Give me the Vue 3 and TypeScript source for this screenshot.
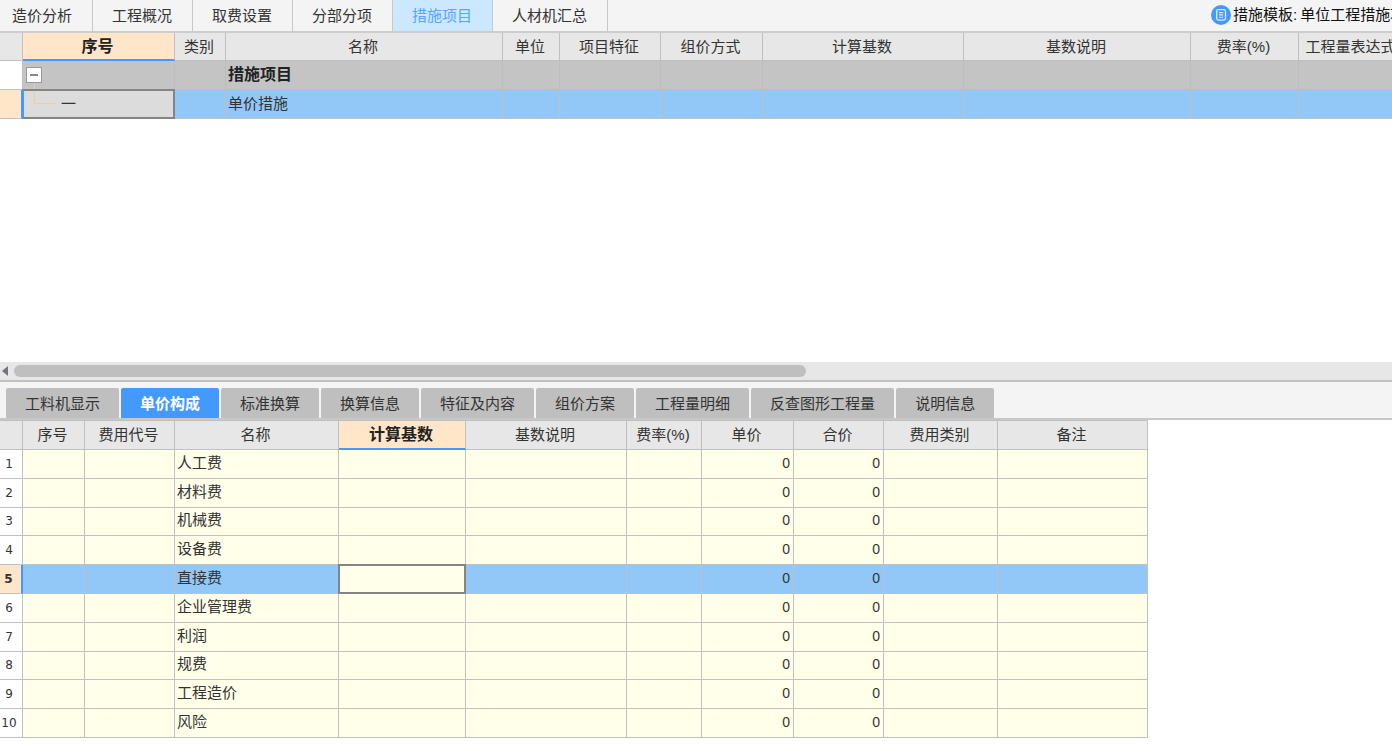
<script setup lang="ts">
import { ref } from 'vue'

interface Column {
  key: string
  label: string
  width: number
}

interface FeeRow {
  name: string
  unitPrice: number
  totalPrice: number
}

const mainTabs: string[] = ['造价分析', '工程概况', '取费设置', '分部分项', '措施项目', '人材机汇总']
const activeMainTab = ref('措施项目')

const itemColumns: Column[] = [
  { key: 'no', label: '序号', width: 152 },
  { key: 'type', label: '类别', width: 51 },
  { key: 'name', label: '名称', width: 277 },
  { key: 'unit', label: '单位', width: 57 },
  { key: 'feature', label: '项目特征', width: 101 },
  { key: 'method', label: '组价方式', width: 102 },
  { key: 'base', label: '计算基数', width: 201 },
  { key: 'baseNote', label: '基数说明', width: 227 },
  { key: 'rate', label: '费率(%)', width: 108 },
  { key: 'formula', label: '工程量表达式', width: 106 },
]
const itemRestColumns = itemColumns.slice(3)
const expanded = ref(true)

const detailTabs: string[] = [
  '工料机显示',
  '单价构成',
  '标准换算',
  '换算信息',
  '特征及内容',
  '组价方案',
  '工程量明细',
  '反查图形工程量',
  '说明信息',
]
const activeDetailTab = ref('单价构成')

const feeColumns: Column[] = [
  { key: 'no', label: '序号', width: 62 },
  { key: 'code', label: '费用代号', width: 90 },
  { key: 'name', label: '名称', width: 164 },
  { key: 'base', label: '计算基数', width: 127 },
  { key: 'baseNote', label: '基数说明', width: 161 },
  { key: 'rate', label: '费率(%)', width: 75 },
  { key: 'unitPrice', label: '单价', width: 92 },
  { key: 'totalPrice', label: '合价', width: 90 },
  { key: 'category', label: '费用类别', width: 114 },
  { key: 'remark', label: '备注', width: 150 },
]

const feeRows: FeeRow[] = [
  '人工费',
  '材料费',
  '机械费',
  '设备费',
  '直接费',
  '企业管理费',
  '利润',
  '规费',
  '工程造价',
  '风险',
].map((name) => ({ name, unitPrice: 0, totalPrice: 0 }))
const selectedRow = ref(4)
</script>

<template>
  <div class="page">
    <header class="topbar">
      <nav class="main-tabs" role="tablist">
        <button
          v-for="tab in mainTabs"
          :key="tab"
          type="button"
          role="tab"
          class="main-tab"
          :class="{ active: tab === activeMainTab }"
          :aria-selected="tab === activeMainTab"
          @click="activeMainTab = tab"
        >{{ tab }}</button>
      </nav>
      <button type="button" class="template">
        <svg class="template-icon" viewBox="0 0 20 20" aria-hidden="true">
          <circle cx="10" cy="10" r="10" fill="#4499fe" />
          <rect x="5.7" y="4.7" width="8.8" height="10.4" rx="1.8" fill="none" stroke="#dcecff" stroke-width="1.3" />
          <path d="M8 7.6h4.2M8 9.9h4.2M8 12.2h4.2" stroke="#dcecff" stroke-width="1.1" fill="none" />
        </svg>
        <span class="template-label">措施模板:</span>
        <span>单位工程措施项目</span>
      </button>
    </header>

    <main class="items">
      <table class="grid item-grid">
        <colgroup>
          <col class="col-head" />
          <col v-for="c in itemColumns" :key="c.key" :style="{ width: c.width + 'px' }" />
        </colgroup>
        <thead>
          <tr>
            <th class="corner"></th>
            <th v-for="c in itemColumns" :key="c.key" scope="col" :class="{ current: c.key === 'no' }">{{ c.label }}</th>
          </tr>
        </thead>
        <tbody>
          <tr class="group">
            <td class="row-head"></td>
            <td class="tree">
              <button type="button" class="toggle" aria-label="展开或折叠" :aria-expanded="expanded" @click="expanded = !expanded">
                <svg viewBox="0 0 16 16" aria-hidden="true">
                  <path d="M4 8h8" stroke="#555" stroke-width="1.4" />
                  <path v-if="!expanded" d="M8 4v8" stroke="#555" stroke-width="1.4" />
                </svg>
              </button>
            </td>
            <td></td>
            <td>措施项目</td>
            <td v-for="c in itemRestColumns" :key="c.key"></td>
          </tr>
          <tr v-if="expanded" class="selected">
            <td class="row-head"></td>
            <td class="focus tree-leaf">一</td>
            <td></td>
            <td>单价措施</td>
            <td v-for="c in itemRestColumns" :key="c.key"></td>
          </tr>
        </tbody>
      </table>
    </main>

    <div class="scrollbar">
      <svg class="scroll-arrow" viewBox="0 0 6 10" aria-hidden="true">
        <path d="M6 0v10L0 5z" fill="#73757a" />
      </svg>
      <div class="scroll-thumb"></div>
    </div>

    <section class="detail">
      <nav class="detail-tabs" role="tablist">
        <button
          v-for="tab in detailTabs"
          :key="tab"
          type="button"
          role="tab"
          class="detail-tab"
          :class="{ active: tab === activeDetailTab }"
          :aria-selected="tab === activeDetailTab"
          @click="activeDetailTab = tab"
        >{{ tab }}</button>
      </nav>
      <table class="grid fee-grid">
        <colgroup>
          <col class="col-head" />
          <col v-for="c in feeColumns" :key="c.key" :style="{ width: c.width + 'px' }" />
        </colgroup>
        <thead>
          <tr>
            <th class="corner"></th>
            <th v-for="c in feeColumns" :key="c.key" scope="col" :class="{ current: c.key === 'base' }">{{ c.label }}</th>
          </tr>
        </thead>
        <tbody>
          <tr v-for="(row, i) in feeRows" :key="row.name" :class="{ selected: i === selectedRow }" @click="selectedRow = i">
            <th scope="row" class="row-head">{{ i + 1 }}</th>
            <td></td>
            <td></td>
            <td>{{ row.name }}</td>
            <td :class="{ focus: i === selectedRow }"></td>
            <td></td>
            <td></td>
            <td class="number">{{ row.unitPrice }}</td>
            <td class="number">{{ row.totalPrice }}</td>
            <td></td>
            <td></td>
          </tr>
        </tbody>
      </table>
    </section>
  </div>
</template>

<style>
body {
  margin: 0;
  background: #fff;
}
</style>

<style scoped>
.page {
  display: flex;
  flex-direction: column;
  min-height: 100vh;
  overflow: hidden;
  font-family: "Liberation Sans", "Noto Sans CJK SC", sans-serif;
  font-size: 15px;
  line-height: 20px;
  color: #333;
}

button {
  margin: 0;
  border: 0;
  font: inherit;
  color: inherit;
  white-space: nowrap;
  cursor: pointer;
}

.topbar {
  display: flex;
  justify-content: space-between;
  height: 31px;
  background: #f4f4f4;
  border-bottom: 2px solid #cdcdcd;
}

.main-tabs {
  display: flex;
}

.main-tab {
  padding: 1px 20px 0 19px;
  border-right: 1px solid #c8c8c8;
  background: transparent;
}

.main-tab:first-child {
  padding-left: 12px;
}

.main-tab.active {
  background: #cce8ff;
  color: #56a5ff;
}

.template {
  display: flex;
  align-items: center;
  flex: 0 0 181px;
  padding: 0 0 1px;
  overflow: hidden;
  background: transparent;
  color: #111;
}

.template-icon {
  flex: none;
  width: 20px;
  height: 20px;
  margin-right: 2px;
}

.template-label {
  margin-right: 3px;
}

.items {
  flex: 1;
  overflow: hidden;
}

.grid {
  table-layout: fixed;
  border-collapse: separate;
  border-spacing: 0;
}

.item-grid {
  width: 1405px;
}

.fee-grid {
  width: 1148px;
  height: 318px;
  border-top: 1px solid #bfbfbf;
}

.col-head {
  width: 23px;
}

.grid th,
.grid td {
  box-sizing: border-box;
  padding: 0 3px 0 2px;
  border-right: 1px solid #c0c0c0;
  border-bottom: 1px solid #c0c0c0;
  font-weight: 400;
  white-space: nowrap;
}

.grid td {
  position: relative;
  text-align: left;
}

.grid thead th {
  height: 29px;
  padding: 0 2px 0 0;
  background: #e7e7e7;
  text-align: center;
}

.item-grid thead th {
  height: 28px;
}

.item-grid td {
  height: 29px;
}

.grid thead th.current {
  background: #ffe6c8;
  border-bottom: 2px solid #4499fe;
  font-size: 16px;
  font-weight: 700;
  color: #222;
}

.item-grid thead th.current {
  padding-top: 2px;
}

.group td {
  background: #c4c4c4;
  border-color: #bebebe;
  font-size: 16px;
  font-weight: 700;
  color: #222;
}

.group .row-head {
  background: #fff;
}

.grid .selected td {
  background: #92c8f7;
}

.grid .selected .row-head {
  background: #ffe6c8;
  border-right: 2px solid #4499fe;
  font-weight: 700;
}

.focus::after {
  content: "";
  position: absolute;
  inset: -1px;
  border: 2px solid #848484;
}

.item-grid .selected .focus {
  background: #dcdcdc;
}

.item-grid .selected .focus::after {
  border-left-color: #4499fe;
}

.grid .tree {
  padding-left: 3px;
}

.toggle {
  display: block;
  width: 16px;
  height: 16px;
  padding: 0;
  background: #fff;
  outline: 1px solid #999;
  outline-offset: -1px;
}

.toggle svg {
  display: block;
}

.tree::after {
  content: "";
  position: absolute;
  left: 11px;
  top: 22px;
  bottom: 0;
  border-left: 1px solid #f8cd94;
}

.grid .tree-leaf {
  padding-left: 38px;
}

.tree-leaf::before {
  content: "";
  position: absolute;
  left: 11px;
  top: 1px;
  width: 20px;
  height: 12px;
  border-left: 1px solid #f8cd94;
  border-bottom: 1px solid #f8cd94;
}

.scrollbar {
  display: flex;
  align-items: center;
  gap: 6px;
  height: 18px;
  padding-left: 2px;
  background: #e7e7e7;
  border-bottom: 2px solid #c0c0c0;
}

.scroll-arrow {
  flex: none;
  width: 6px;
  height: 10px;
}

.scroll-thumb {
  width: 57%;
  height: 12px;
  border-radius: 6px;
  background: #bfbfbf;
}

.detail {
  padding-bottom: 12px;
}

.detail-tabs {
  display: flex;
  gap: 2px;
  padding: 6px 6px 0;
  background: #f4f4f4;
  border-bottom: 2px solid #c8c8c8;
}

.detail-tab {
  height: 30px;
  padding: 2px 19px 0;
  border-radius: 2px 2px 0 0;
  background: #bfbfbf;
}

.detail-tab.active {
  background: #4499fe;
  color: #fff;
  font-weight: 700;
}

.fee-grid td {
  background: #ffffea;
}

.fee-grid .selected .focus {
  background: #ffffea;
}

.fee-grid tbody .row-head {
  padding: 0 4px 0 0;
  background: #fff;
  font-family: "DejaVu Sans", sans-serif;
  font-size: 12px;
  text-align: center;
}

.fee-grid tbody td {
  padding-bottom: 2px;
}

.grid .number {
  font-size: 14px;
  text-align: right;
}
</style>
